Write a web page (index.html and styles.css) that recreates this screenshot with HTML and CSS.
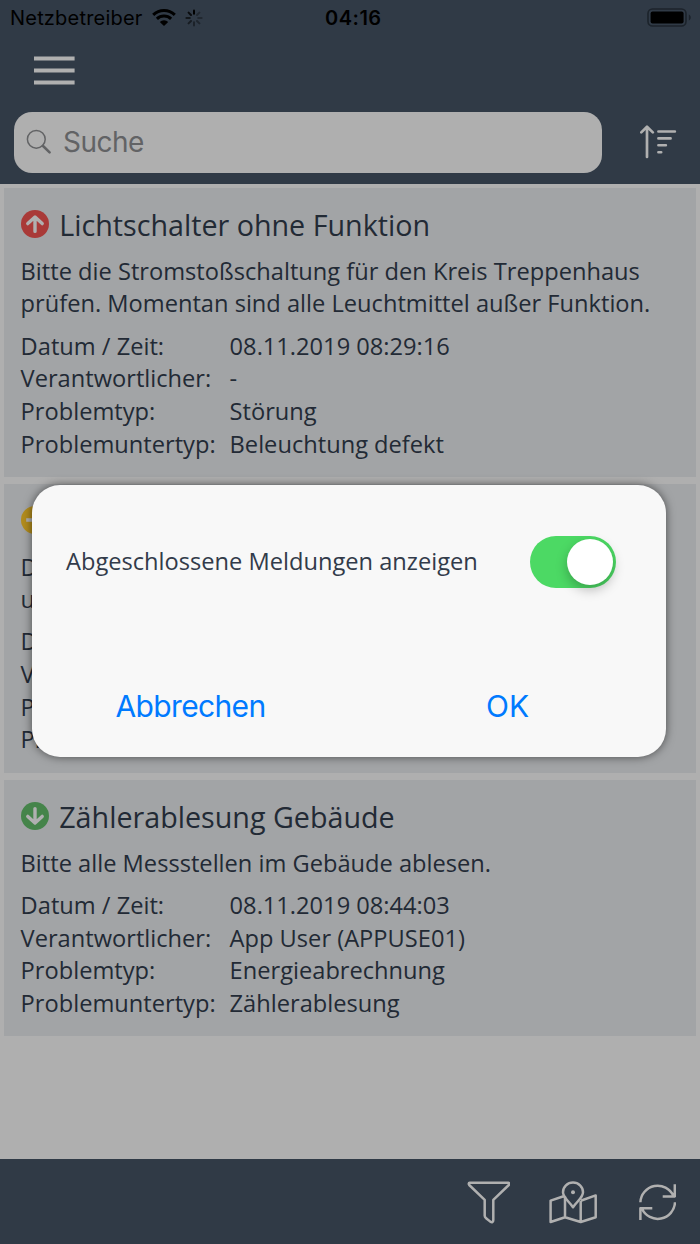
FILE: index.html
```html
<!DOCTYPE html>
<html lang="de">

<head>
    <meta charset="UTF-8">
    <title>Meldungen</title>
    <link rel="stylesheet" href="styles.css">
</head>

<body>
    <header class="header">
        <div class="status">
            <span class="carrier">Netzbetreiber</span>
            <svg class="wifi" width="24" height="18" viewBox="0 0 24 18">
                <path d="M1.2 5.9a15.5 15.5 0 0 1 21.6 0M4.9 9.9a10.2 10.2 0 0 1 14.2 0" fill="none" stroke="#000" stroke-width="3" />
                <path d="M7.8 12.9a6 6 0 0 1 8.4 0L12 17z" />
            </svg>
            <svg class="spinner" width="18" height="18" viewBox="-9 -9 18 18" stroke="#000" stroke-width="2" stroke-linecap="round">
                <path d="M0-4.2v-3.4" />
                <path d="M3-3l2.4-2.4" opacity=".3" />
                <path d="M4.2 0h3.4" opacity=".3" />
                <path d="M3 3l2.4 2.4" opacity=".35" />
                <path d="M0 4.2v3.4" opacity=".4" />
                <path d="M-3 3l-2.4 2.4" opacity=".5" />
                <path d="M-4.2 0h-3.4" opacity=".6" />
                <path d="M-3-3l-2.4-2.4" opacity=".8" />
            </svg>
            <span class="time">04:16</span>
            <svg class="battery" width="46" height="20" viewBox="0 0 46 20">
                <rect x="1" y="1" width="38" height="17" rx="4.5" fill="none" stroke="#1c232b" stroke-width="1.6" />
                <rect x="3.6" y="3.6" width="33" height="12" rx="2" />
                <path d="M41.8 6.6c2.6 1 2.6 5 0 6z" fill="#1c232b" />
            </svg>
        </div>
        <svg class="menu" width="41" height="30" viewBox="0 0 41 30">
            <path d="M0 2.500h40.600M0 14.500h40.600M0 26.500h40.600" stroke="#b0b0b0" stroke-width="4.200" />
        </svg>
        <div class="tools">
            <div class="search">
                <svg width="26" height="26" viewBox="0 0 26 26" fill="none" stroke="#626365">
                    <circle cx="10.3" cy="10.3" r="8.9" stroke-width="1.5" />
                    <path d="M16.8 16.8l6.8 6.6" stroke-width="2.6" stroke-linecap="round" />
                </svg>
                <span class="placeholder">Suche</span>
            </div>
            <svg class="sort" width="38" height="34" viewBox="0 0 38 34" fill="none" stroke="#b0b0b0" stroke-linecap="round">
                <path d="M7 32V2.2M1.3 7.4L7 1.8l5.8 5.6" stroke-width="2.7" stroke-linejoin="round" />
                <path d="M18.4 6.5h16.5M18.4 13.4h12.2M18.4 20.3h7.5M18.4 27.3h2.8" stroke-width="2.6" />
            </svg>
        </div>
    </header>

    <main class="list">
        <div class="card">
            <div class="title">
                <svg width="28" height="28" viewBox="0 0 28 28" fill="none">
                    <circle cx="14" cy="14" r="14" fill="#a93a38" />
                    <path d="M14 21.4V8M6.8 13.6L14 7l7.2 6.6" stroke="#b0b0b0" stroke-width="3.4" stroke-linecap="round" stroke-linejoin="round" />
                </svg>
                <span>Lichtschalter ohne Funktion</span>
            </div>
            <p class="desc">Bitte die Stromstoßschaltung für den Kreis Treppenhaus<br>prüfen. Momentan sind alle Leuchtmittel außer Funktion.</p>
            <div class="rows">
                <span>Datum / Zeit:</span><span>08.11.2019 08:29:16</span>
                <span>Verantwortlicher:</span><span>-</span>
                <span>Problemtyp:</span><span>Störung</span>
                <span>Problemuntertyp:</span><span>Beleuchtung defekt</span>
            </div>
        </div>
        <div class="card">
            <div class="title">
                <svg width="28" height="28" viewBox="0 0 28 28" fill="none">
                    <circle cx="14" cy="14" r="14" fill="#b28c1d" />
                    <path d="M5.2 14h17.6" stroke="#b0b0b0" stroke-width="3.6" />
                </svg>
            </div>
            <p class="desc">D<br>u</p>
            <div class="rows">
                <span>D</span><span></span>
                <span>V</span><span></span>
                <span>P</span><span></span>
                <span>Pr</span><span></span>
            </div>
        </div>
        <div class="card">
            <div class="title">
                <svg width="28" height="28" viewBox="0 0 28 28" fill="none">
                    <circle cx="14" cy="14" r="14" fill="#45844a" />
                    <path d="M14 6.6V20M6.8 14.4L14 21l7.2-6.6" stroke="#b0b0b0" stroke-width="3.4" stroke-linecap="round" stroke-linejoin="round" />
                </svg>
                <span>Zählerablesung Gebäude</span>
            </div>
            <p class="desc">Bitte alle Messstellen im Gebäude ablesen.</p>
            <div class="rows">
                <span>Datum / Zeit:</span><span>08.11.2019 08:44:03</span>
                <span>Verantwortlicher:</span><span>App User (APPUSE01)</span>
                <span>Problemtyp:</span><span>Energieabrechnung</span>
                <span>Problemuntertyp:</span><span>Zählerablesung</span>
            </div>
        </div>
    </main>

    <footer class="footer">
        <svg width="44" height="44" viewBox="0 0 44 44">
            <path d="M3.6 2.8h38.8c1 0 1 1.4.4 2.2L27.3 19.8v20.2c0 2.400-1.400 2.600-3 1.600l-4.200-3.400c-1-.8-1.400-1.200-1.400-2.400V19.800L3.200 5C2.500 4.200 2.600 2.800 3.600 2.800z" />
        </svg>
        <svg width="50" height="44" viewBox="0 0 50 44">
            <path d="M14.6 16.2L1.6 20.6V42L16 37.2 31.7 42l15-4.8V15.4L31.7 20.800M16 16.500v20.700M31.700 21v21" />
            <path d="M24 27.2C19.5 20.8 14 17.5 14 12.2a10 9.7 0 0 1 20 0C34 17.5 28.5 20.8 24 27.2z" />
            <circle cx="24" cy="12.2" r="2" fill="#b0b0b0" stroke="none" />
        </svg>
        <svg width="38" height="38" viewBox="0 0 38 38">
            <path d="M2.4 19.3a17.3 17.3 0 0 1 33-6.5M37 19.3a17.3 17.3 0 0 1-33 6.5M36.800 1.200v12.200H24.700M2.400 37V25.200h11.900" />
        </svg>
    </footer>

    <div class="dialog">
        <div class="option">
            <span class="label">Abgeschlossene Meldungen anzeigen</span>
            <span class="toggle"><span class="knob"></span></span>
        </div>
        <div class="buttons">
            <span class="btn cancel">Abbrechen</span>
            <span class="btn ok">OK</span>
        </div>
    </div>
</body>

</html>
```
FILE: styles.css
```css
body,
html {
    margin: 0;
    height: 100%;
}

body {
    position: relative;
    display: flex;
    flex-direction: column;
    overflow: hidden;
    background-color: #afafaf;
    color: #222a35;
    font-family: "Open Sans", "Noto Sans", sans-serif;
    font-size: 23.65px;
}

svg {
    display: block;
    flex: none;
}

.header {
    box-sizing: border-box;
    height: 184px;
    background-color: #303a46;
}

.status {
    display: grid;
    grid-template-columns: 142px 42px 141px 322px 46px;
    align-items: center;
    height: 36px;
    color: #000;
    font-family: Inter, "Liberation Sans", sans-serif;
    font-size: 20px;
}

.carrier {
    padding-left: 10px;
    letter-spacing: 0.2px;
}

.wifi {
    margin-left: 10px;
}

.spinner {
    margin-left: 1px;
}

.time {
    font-weight: 600;
    letter-spacing: 0.5px;
}

.menu {
    margin: 20px 0 0 34px;
}

.tools {
    display: flex;
    align-items: center;
    margin: 25.5px 0 0 14px;
}

.search {
    display: flex;
    align-items: center;
    box-sizing: border-box;
    width: 588px;
    height: 61px;
    padding-left: 12px;
    border-radius: 18px;
    background-color: #afafaf;
}

.placeholder {
    margin-left: 11px;
    color: #626365;
    font-family: Inter, "Liberation Sans", sans-serif;
    font-size: 28px;
    letter-spacing: -0.5px;
}

.sort {
    margin-left: 38px;
}

.list {
    display: flex;
    flex: 1;
    flex-direction: column;
    gap: 7px;
    padding: 4px 4px 0;
}

.card {
    padding: 17px 17px 16.5px 16.6px;
    background-color: #a2a4a6;
}

.title {
    display: flex;
    align-items: center;
    gap: 10.6px;
    height: 40px;
    font-size: 28.7px;
    line-height: 40px;
}

.title svg {
    margin-bottom: 1.5px;
}

.desc {
    margin: 10px 0 10.5px;
    line-height: 32px;
    white-space: nowrap;
}

.rows {
    display: grid;
    grid-template-columns: 209px 1fr;
    grid-auto-rows: 32.7px;
    line-height: 32.7px;
    white-space: nowrap;
}

.footer {
    display: flex;
    align-items: center;
    justify-content: flex-end;
    gap: 39px;
    box-sizing: border-box;
    height: 85px;
    padding-right: 24px;
    background-color: #303a46;
}

.footer svg {
    fill: none;
    stroke: #b0b0b0;
    stroke-width: 2.5;
    stroke-linejoin: round;
}

/* liegt über der Liste */
.dialog {
    position: absolute;
    top: 485px;
    left: 32px;
    box-sizing: border-box;
    width: 634px;
    height: 272px;
    border-radius: 28px;
    background-color: #f8f8f8;
    box-shadow: 0 0 10px rgba(0, 0, 0, 0.55);
}

.option {
    display: flex;
    align-items: center;
    justify-content: space-between;
    margin: 51px 50px 0 34px;
    color: #323b4a;
    white-space: nowrap;
}

.label {
    padding-bottom: 3px;
}

.toggle {
    box-sizing: border-box;
    width: 86px;
    height: 52px;
    padding: 3px 3px 3px 37px;
    border-radius: 26px;
    background-color: #4cd964;
}

.knob {
    display: block;
    width: 46px;
    height: 46px;
    border-radius: 50%;
    background-color: #fff;
    box-shadow: 0 5px 12px rgba(0, 0, 0, 0.25);
}

.buttons {
    display: grid;
    grid-template-columns: 317px 317px;
    margin-top: 99px;
    color: #007aff;
    font-family: Inter, "Liberation Sans", sans-serif;
    font-size: 30px;
    line-height: 38px;
    text-align: center;
}

.cancel {
    letter-spacing: -0.65px;
}
```
